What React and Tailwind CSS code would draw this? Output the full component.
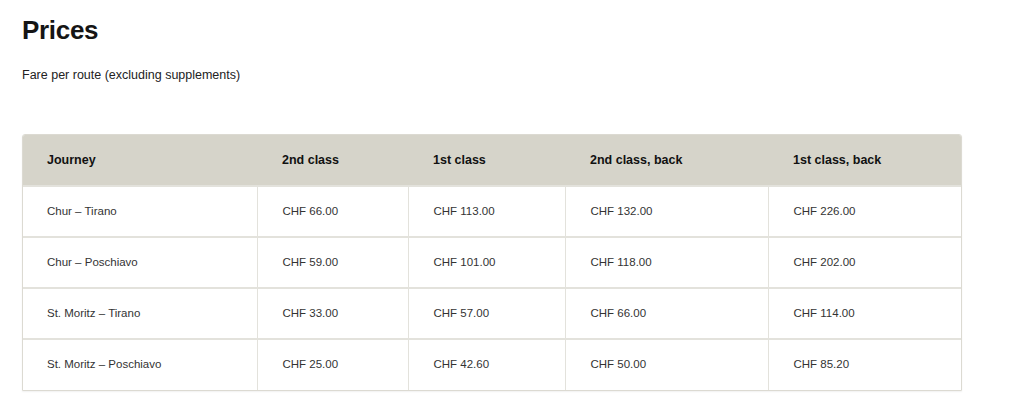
import React from 'react';

const rows = [
  ['Chur – Tirano', 'CHF 66.00', 'CHF 113.00', 'CHF 132.00', 'CHF 226.00'],
  ['Chur – Poschiavo', 'CHF 59.00', 'CHF 101.00', 'CHF 118.00', 'CHF 202.00'],
  ['St. Moritz – Tirano', 'CHF 33.00', 'CHF 57.00', 'CHF 66.00', 'CHF 114.00'],
  ['St. Moritz – Poschiavo', 'CHF 25.00', 'CHF 42.60', 'CHF 50.00', 'CHF 85.20'],
];

const headers = ['Journey', '2nd class', '1st class', '2nd class, back', '1st class, back'];
const widths = ['w-[234px]', 'w-[151px]', 'w-[157px]', 'w-[203px]', 'w-auto'];

export default function App() {
  return (
    <div className="min-h-screen bg-white pl-[22px] pt-[14px] text-[#151515]" style={{ fontFamily: '"Liberation Sans", Arial, sans-serif' }}>
      <h1 className="text-[26px] font-bold leading-[32px] tracking-[-0.3px]">Prices</h1>
      <p className="mt-[20px] text-[12.5px] leading-[18px] text-[#222]">Fare per route (excluding supplements)</p>

      {/* tabelle */}
      <div className="mt-[50px] w-[940px] overflow-hidden rounded-t-[3px] border border-[#dcdad2] shadow-[0_1px_2px_rgba(0,0,0,0.06)]">
        <table className="w-full border-collapse table-fixed">
          <thead>
            <tr className="h-[51px] bg-[#d6d4ca]">
              {headers.map((h, i) => (
                <th key={h} className={`${widths[i]} ${i > 0 ? 'pl-[25px]' : 'pl-[24px]'} text-left text-[12.5px] font-bold text-[#111]`}>{h}</th>
              ))}
            </tr>
          </thead>
          <tbody>
            {rows.map((r) => (
              <tr key={r[0]} className="h-[51px] border-t-2 border-[#e3e2dc]">
                {r.map((c, i) => (
                  <td key={i} className={`text-[11.5px] text-[#333] ${i > 0 ? 'pl-[25px] border-l border-[#e3e2dc]' : 'pl-[24px]'}`}>{c}</td>
                ))}
              </tr>
            ))}
          </tbody>
        </table>
      </div>
    </div>
  );
}
